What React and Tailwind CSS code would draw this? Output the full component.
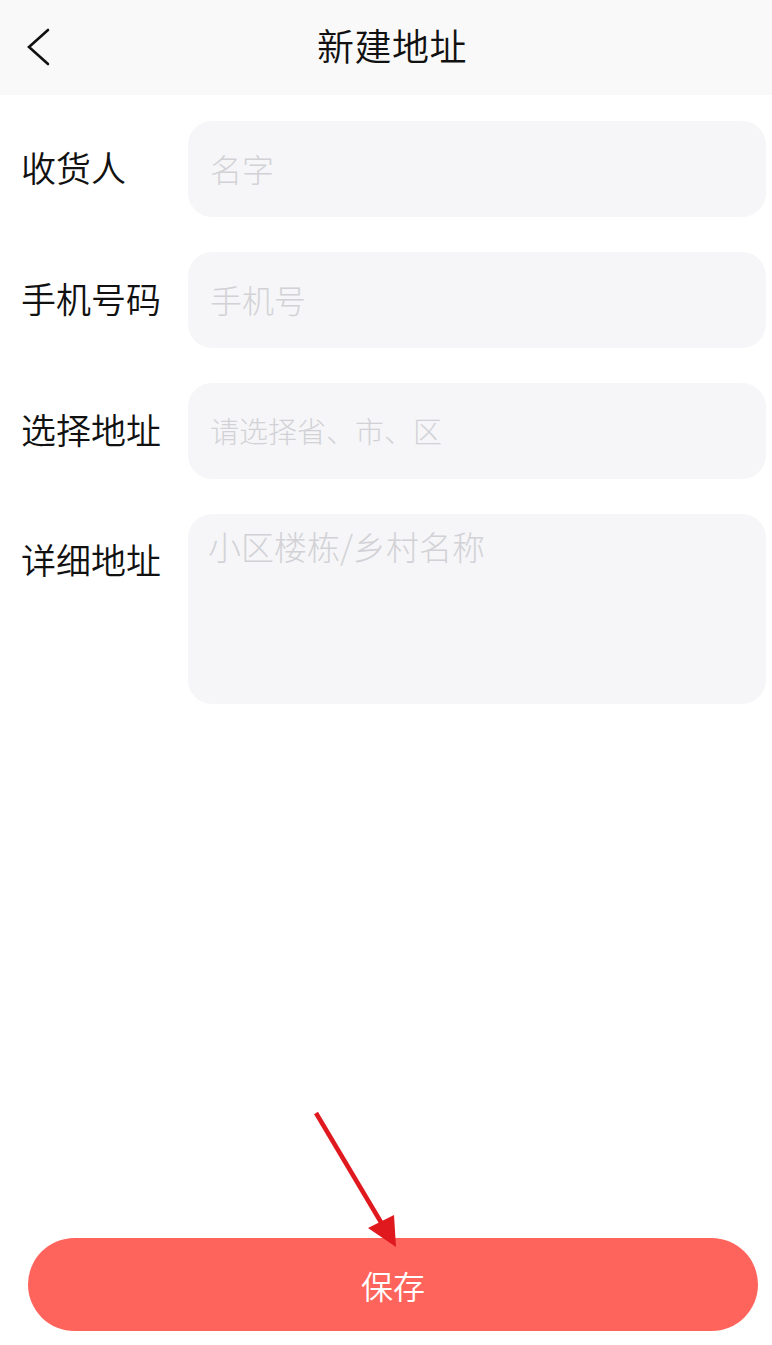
import React from "react";

const fields = [
  { label: "收货人", placeholder: "名字", size: "text-[32px]" },
  { label: "手机号码", placeholder: "手机号", size: "text-[32px]" },
  { label: "选择地址", placeholder: "请选择省、市、区", size: "text-[29px]" },
  { label: "详细地址", placeholder: "小区楼栋/乡村名称", tall: true },
];

export default function App() {
  return (
    <div
      className="relative w-[772px] h-[1345px] bg-white flex flex-col overflow-hidden"
      style={{ fontFamily: '"Noto Sans CJK SC", "Noto Sans", sans-serif' }}
    >
      {/* header */}
      <div className="relative h-[95px] bg-[#f9f9f9] flex items-center justify-center pl-[12px] shrink-0">
        <button className="absolute left-[26px] top-[27px] w-[26px] h-[40px]">
          <svg width="26" height="40" viewBox="0 0 26 40" fill="none">
            <path d="M22 3 L3 20 L22 37" stroke="#111" strokeWidth="2.6" strokeLinecap="round" strokeLinejoin="miter" />
          </svg>
        </button>
        <h1 className="text-[37px] font-[350] leading-none text-[#111] tracking-[0.5px] -mt-[4px]">新建地址</h1>
      </div>

      {/* form */}
      <div className="flex flex-col gap-[35px] pt-[26px] pl-[21px] pr-[6px]">
        {fields.map((f) => (
          <div key={f.label} className="flex items-start">
            <div
              className={`w-[167px] shrink-0 text-[35px] font-[350] leading-none text-[#111] ${
                f.tall ? "pt-[27px]" : "pt-[28px]"
              }`}
            >
              {f.label}
            </div>
            {f.tall ? (
              <textarea
                placeholder={f.placeholder}
                className="flex-1 h-[190px] rounded-[24px] bg-[#f6f6f8] px-[20px] pt-[10px] text-[33px] font-light leading-[44px] text-[#333] placeholder:text-[#d2d2d6] outline-none resize-none"
              />
            ) : (
              <input
                placeholder={f.placeholder}
                className={`flex-1 h-[96px] rounded-[24px] bg-[#f6f6f8] px-[22px] pb-[3px] ${f.size} font-light text-[#333] placeholder:text-[#d2d2d6] outline-none`}
              />
            )}
          </div>
        ))}
      </div>

      <div className="flex-1" />

      {/* save button */}
      <div className="px-[28px] pr-[14px] pb-[14px]">
        <button className="w-full h-[93px] rounded-full bg-[#ff645c] text-white text-[32px] font-[350] leading-none">
          保存
        </button>
      </div>

      {/* annotation arrow */}
      <svg className="absolute left-0 top-0 pointer-events-none" width="772" height="1345" viewBox="0 0 772 1345">
        <line x1="316" y1="1113" x2="385" y2="1229" stroke="#e0191f" strokeWidth="4.5" />
        <polygon points="396,1247 368,1228 394,1215" fill="#e0191f" />
      </svg>
    </div>
  );
}
